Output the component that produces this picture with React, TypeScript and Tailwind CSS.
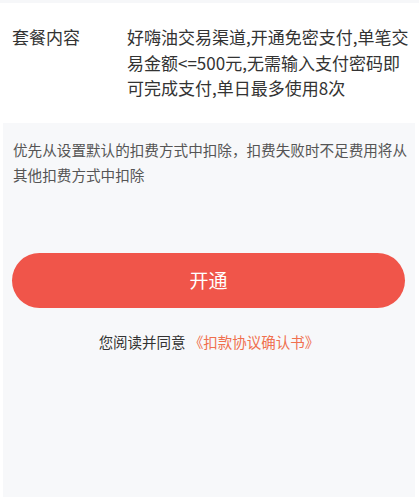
import React from 'react';

const App: React.FC = () => {
  return (
    <div
      className="w-[419px] h-[500px] bg-white flex flex-col overflow-hidden"
      style={{ fontFamily: '"Noto Sans CJK SC", "Noto Sans", sans-serif' }}
    >
      <div className="h-[3px] bg-[#f6f7f9]" />

      {/* Package info */}
      <div className="flex pt-[21px] h-[120px] px-3 text-[17px] leading-[25.5px] text-[#333]">
        <div className="w-[115px] shrink-0">套餐内容</div>
        <div className="whitespace-nowrap">
          <div>好嗨油交易渠道,开通免密支付,单笔交</div>
          <div>易金额&lt;=500元,无需输入支付密码即</div>
          <div>可完成支付,单日最多使用8次</div>
        </div>
      </div>

      {/* Gray area */}
      <div className="flex-1 ml-[3px] mr-[4px] mb-[3px] bg-[#f7f8fa] flex flex-col">
        <p className="pt-[15px] px-[10px] text-[14.6px] leading-[24.5px] text-[#555] whitespace-nowrap">
          优先从设置默认的扣费方式中扣除，扣费失败时不足费用将从
          <br />
          其他扣费方式中扣除
        </p>

        <button className="mt-[66px] ml-[9px] w-[393px] h-[55px] rounded-full bg-[#f0554a] text-white text-[19px]">
          开通
        </button>

        <div className="mt-[24px] text-center text-[14.5px] leading-[20px] text-[#333]">
          您阅读并同意 <span className="text-[#f0704f]">《扣款协议确认书》</span>
        </div>
      </div>
    </div>
  );
};

export default App;
